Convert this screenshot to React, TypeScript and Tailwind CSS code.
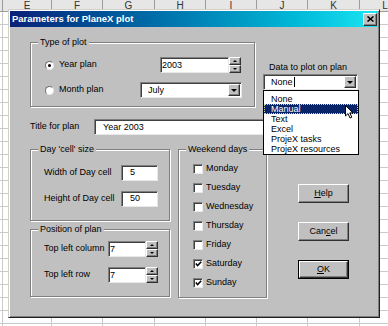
import { clsx } from 'clsx'
import React from 'react'

const sheetCols = ['', 'E', 'F', 'G', 'H', 'I', 'J', 'K', 'L']
const weekDays = ['Monday', 'Tuesday', 'Wednesday', 'Thursday', 'Friday', 'Saturday', 'Sunday']
const plotSources = ['None', 'Manual', 'Text', 'Excel', 'ProjeX tasks', 'ProjeX resources']

const raised =
  'border border-t-white border-l-white border-r-[#303030] border-b-[#303030] shadow-[inset_-1px_-1px_0_#808080] bg-[#c0c0c0]'
const sunken =
  'border border-t-[#808080] border-l-[#808080] border-r-[#e8e8e8] border-b-[#e8e8e8] shadow-[inset_1px_1px_0_#404040] bg-white'

// Excel grid behind the dialog
const Sheet: React.FC = () => (
  <div className="grid grid-cols-[3px_49px_51px_52px_51px_51px_51px_52px_51px] grid-rows-[12px] auto-rows-[13px]">
    {sheetCols.map((c, i) => (
      <div
        key={'h' + i}
        className="flex items-center justify-center border-r border-b border-[#9c9c9c] bg-[#e6e6e6] text-[10px] leading-none text-[#333]"
      >
        {c}
      </div>
    ))}
    {Array.from({ length: 25 * sheetCols.length }).map((_, i) => (
      <div key={i} className="border-r border-b border-[#cacaca]" />
    ))}
  </div>
)

const Group: React.FC<{ title: string; className?: string; children?: React.ReactNode }> = ({
  title,
  className,
  children,
}) => (
  <div className={clsx('relative border border-[#808080] shadow-[inset_1px_1px_0_#fff,1px_1px_0_#fff]', className)}>
    <span className="absolute -top-[6px] left-[7px] bg-[#c0c0c0] px-[2px] leading-[11px]">{title}</span>
    {children}
  </div>
)

const Field: React.FC<{ className?: string; children?: React.ReactNode }> = ({ className, children }) => (
  <div className={clsx('flex h-[16px] items-center leading-none', sunken, className)}>{children}</div>
)

const Spinner: React.FC = () => (
  <div className="flex h-[16px] w-[12px] flex-col">
    <div className={clsx('flex h-[8px] items-center justify-center', raised)}>
      <div className="h-0 w-0 border-x-[2px] border-b-[2px] border-x-transparent border-b-black" />
    </div>
    <div className={clsx('flex h-[8px] items-center justify-center', raised)}>
      <div className="h-0 w-0 border-x-[2px] border-t-[2px] border-x-transparent border-t-black" />
    </div>
  </div>
)

const Combo: React.FC<{ text: string; className?: string; caret?: boolean }> = ({ text, className, caret }) => (
  <Field className={clsx('justify-between pl-[7px]', className)}>
    <span className="flex items-center">
      {text}
      {caret && <span className="ml-[1px] h-[10px] w-[1px] bg-black" />}
    </span>
    <div className={clsx('mr-[1px] flex h-[12px] w-[12px] items-center justify-center', raised)}>
      <div className="h-0 w-0 border-x-[3px] border-t-[3px] border-x-transparent border-t-black" />
    </div>
  </Field>
)

const Radio: React.FC<{ checked?: boolean }> = ({ checked }) => (
  <div className="flex h-[9px] w-[9px] items-center justify-center rounded-full border border-t-[#707070] border-l-[#707070] border-r-[#e8e8e8] border-b-[#e8e8e8] bg-white">
    {checked && <div className="h-[3px] w-[3px] rounded-full bg-black" />}
  </div>
)

const Check: React.FC<{ checked?: boolean }> = ({ checked }) => (
  <div className={clsx('flex h-[10px] w-[10px] items-center justify-center', sunken)}>
    {checked && (
      <svg width="7" height="6" viewBox="0 0 7 6">
        <path d="M0.8 2.6 L2.6 4.6 L6.2 0.8" fill="none" stroke="black" strokeWidth="1.5" />
      </svg>
    )}
  </div>
)

const Button: React.FC<{ children: React.ReactNode; isDefault?: boolean }> = ({ children, isDefault }) => (
  <div className={clsx('h-[19px] w-[51px]', isDefault && 'border border-black')}>
    <div className={clsx('flex h-full w-full items-center justify-center leading-none', raised)}>{children}</div>
  </div>
)

const DropList: React.FC = () => (
  <div className="absolute left-0 top-full z-10 h-[65px] w-[96px] overflow-hidden border border-black bg-white pt-[3px]">
    {plotSources.map((item) => (
      <div
        key={item}
        className={clsx(
          'flex h-[10px] items-center pl-[7px] leading-none',
          item === 'Manual' && 'bg-[#0a246a] text-white outline outline-1 -outline-offset-1 outline-dotted outline-[#d8d890]'
        )}
      >
        {item}
      </div>
    ))}
    {/* mouse pointer */}
    <svg className="absolute left-[81px] top-[14px]" width="9" height="14" viewBox="0 0 9 14">
      <path d="M0.5 0.5 L0.5 11 L3 8.6 L5 13 L6.8 12.2 L4.8 7.9 L8 7.9 Z" fill="white" stroke="black" strokeWidth="1" />
    </svg>
  </div>
)

const Dialog: React.FC = () => (
  <div
    className={clsx(
      'absolute left-[8px] top-[9px] flex h-[309px] w-[372px] flex-col p-[1px] text-[9px] text-black',
      'border border-t-[#d4d0c8] border-l-[#d4d0c8] border-r-[#202020] border-b-[#202020] bg-[#c0c0c0]',
      'shadow-[inset_1px_1px_0_#fff,inset_-1px_-1px_0_#808080]'
    )}
  >
    {/* Title bar */}
    <div className="flex h-[16px] items-center justify-between bg-linear-to-r from-[#0a1f78] to-[#1ae6f2] pl-[2px] pr-[1px]">
      <span className="text-[9.5px] font-bold leading-none text-white">Parameters for PlaneX plot</span>
      <div className={clsx('flex h-[13px] w-[14px] items-center justify-center', raised)}>
        <svg width="7" height="6" viewBox="0 0 7 6">
          <path d="M0.5 0.5 L6.5 5.5 M6.5 0.5 L0.5 5.5" stroke="black" strokeWidth="1.6" />
        </svg>
      </div>
    </div>

    <div className="px-[20px]">
      {/* Type of plot + data source */}
      <div className="flex items-start">
        <Group title="Type of plot" className="mt-[15px] h-[65px] w-[235px]">
          <div className="mt-[14px] flex h-[16px] items-center">
            <div className="flex w-[129px] items-center gap-[5px] pl-[14px]">
              <Radio checked />
              <span>Year plan</span>
            </div>
            <Field className="w-[69px] pl-[1px]">2003</Field>
            <Spinner />
          </div>
          <div className="mt-[9px] flex h-[16px] items-center">
            <div className="flex w-[109px] items-center gap-[5px] pl-[14px]">
              <Radio />
              <span>Month plan</span>
            </div>
            <Combo text="July" className="w-[102px]" />
          </div>
        </Group>

        <div className="ml-[8px] flex flex-col pt-[35px]">
          <span className="h-[11px] pl-[6px] leading-[11px]">Data to plot on plan</span>
          <div className="relative mt-[1px]">
            <Combo text="None" caret className="w-[95px]" />
            <DropList />
          </div>
        </div>
      </div>

      {/* Title */}
      <div className="mt-[12px] flex h-[16px] items-center">
        <span className="w-[64px]">Title for plan</span>
        <Field className="w-[171px] pl-[8px]">Year 2003</Field>
      </div>

      <div className="mt-[14px] flex items-start">
        <div className="flex w-[140px] flex-col gap-[8px]">
          <Group title="Day 'cell' size" className="h-[72px]">
            <div className="mt-[15px] flex h-[15px] items-center pl-[13px]">
              <span className="w-[77px]">Width of Day cell</span>
              <Field className="h-[15px] w-[37px] pl-[8px]">5</Field>
            </div>
            <div className="mt-[11px] flex h-[15px] items-center pl-[13px]">
              <span className="w-[77px]">Height of Day cell</span>
              <Field className="h-[15px] w-[37px] pl-[8px]">50</Field>
            </div>
          </Group>
          <Group title="Position of plan" className="h-[68px]">
            <div className="mt-[11px] flex h-[16px] items-center pl-[13px]">
              <span className="w-[64px]">Top left column</span>
              <Field className="w-[38px] pl-[1px]">7</Field>
              <Spinner />
            </div>
            <div className="mt-[10px] flex h-[16px] items-center pl-[13px]">
              <span className="w-[64px]">Top left row</span>
              <Field className="w-[38px] pl-[1px]">7</Field>
              <Spinner />
            </div>
          </Group>
        </div>

        <Group title="Weekend days" className="ml-[8px] h-[149px] w-[89px]">
          <div className="flex flex-col pt-[9px]">
            {weekDays.map((d) => (
              <div key={d} className="flex h-[19px] items-center gap-[3px] pl-[14px]">
                <Check checked={d === 'Saturday' || d === 'Sunday'} />
                <span>{d}</span>
              </div>
            ))}
          </div>
        </Group>

        <div className="ml-[31px] flex w-[51px] flex-col gap-[19px] pt-[35px]">
          <Button>
            <span className="underline">H</span>elp
          </Button>
          <Button>
            Can<span className="underline">c</span>el
          </Button>
          <Button isDefault>
            <span className="underline">O</span>K
          </Button>
        </div>
      </div>
    </div>
  </div>
)

export default function App() {
  return (
    <div className="relative h-[326px] w-[388px] overflow-hidden bg-white font-['Liberation_Sans',Arial,sans-serif]">
      <Sheet />
      <Dialog />
    </div>
  )
}
